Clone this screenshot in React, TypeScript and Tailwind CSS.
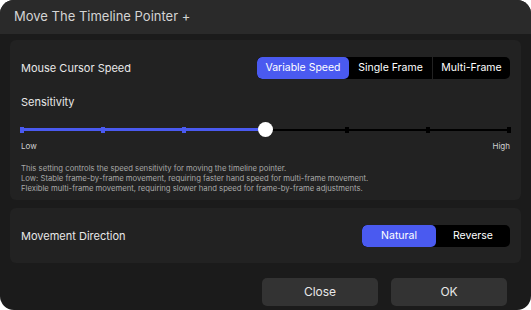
import React, { useState } from 'react'

const ticks = [0, 1, 2, 3, 4, 5, 6]

function Segmented({
  options,
  value,
  onChange,
  widths,
}: {
  options: string[]
  value: string
  onChange: (v: string) => void
  widths: string[]
}) {
  return (
    <div className="flex h-[22px] rounded-[5px] bg-black overflow-hidden">
      {options.map((o, i) => (
        <button
          key={o}
          onClick={() => onChange(o)}
          className={`${widths[i]} h-full text-[10.5px] flex items-center justify-center ${
            value === o ? 'bg-[#4a5af0] text-white rounded-[5px]' : 'text-white'
          } ${i > 0 && value !== o && value !== options[i - 1] ? 'border-l border-[#222]' : ''}`}
        >
          {o}
        </button>
      ))}
    </div>
  )
}

export default function App() {
  const [speed, setSpeed] = useState('Variable Speed')
  const [direction, setDirection] = useState('Natural')
  const level = 3

  return (
    <div className="w-[531px] h-[310px] bg-white" style={{ fontFamily: 'Inter, "Liberation Sans", sans-serif' }}>
      <div className="w-full h-full rounded-[14px] bg-[#1b1b1b] overflow-hidden flex flex-col">
        {/* Title bar */}
        <div className="h-[34px] bg-[#2a2a2a] flex items-center px-[14px] text-[13px] text-[#d4d4d4]">
          Move The Timeline Pointer +
        </div>

        <div className="flex-1 flex flex-col px-[10px] pt-[6px]">
          {/* Speed panel */}
          <div className="bg-[#222222] rounded-[6px] px-[11px] pt-[17px] h-[160px]">
            <div className="flex items-center justify-between">
              <span className="text-[11px] text-[#e8e8e8]">Mouse Cursor Speed</span>
              <Segmented
                options={['Variable Speed', 'Single Frame', 'Multi-Frame']}
                value={speed}
                onChange={setSpeed}
                widths={['w-[92px]', 'w-[83px]', 'w-[78px]']}
              />
            </div>

            <div className="mt-[15px] text-[11px] text-[#e8e8e8]">Sensitivity</div>

            <div className="relative h-[20px] mt-[9px] mx-[1px]">
              <div className="absolute left-0 right-0 top-[9px] h-[2px] bg-black" />
              <div
                className="absolute left-0 top-[8px] h-[3px] bg-[#4a5af0]"
                style={{ width: `${(level / 6) * 100}%` }}
              />
              {ticks.map((t) => (
                <div
                  key={t}
                  className={`absolute top-[7px] w-[4px] h-[6px] -ml-[2px] ${
                    t <= level ? 'bg-[#4a5af0]' : 'bg-black'
                  }`}
                  style={{ left: `${(t / 6) * 100}%` }}
                />
              ))}
              <div
                className="absolute top-[2px] w-[15px] h-[15px] -ml-[8px] rounded-full bg-white"
                style={{ left: `${(level / 6) * 100}%` }}
              />
            </div>

            <div className="flex justify-between text-[8px] text-[#d0d0d0]">
              <span>Low</span>
              <span>High</span>
            </div>

            <div className="mt-[12px] text-[7.7px] leading-[10px] text-[#a8a8a8]">
              <p>This setting controls the speed sensitivity for moving the timeline pointer.</p>
              <p>Low: Stable frame-by-frame movement, requiring faster hand speed for multi-frame movement.</p>
              <p>Flexible multi-frame movement, requiring slower hand speed for frame-by-frame adjustments.</p>
            </div>
          </div>

          {/* Direction panel */}
          <div className="bg-[#222222] rounded-[6px] px-[11px] mt-[8px] h-[55px] flex items-center justify-between">
            <span className="text-[11px] text-[#e8e8e8] mt-[2px]">Movement Direction</span>
            <Segmented
              options={['Natural', 'Reverse']}
              value={direction}
              onChange={setDirection}
              widths={['w-[74px]', 'w-[74px]']}
            />
          </div>

          {/* Footer */}
          <div className="flex justify-end gap-[13px] mt-[15px] pr-[14px]">
            <button className="w-[116px] h-[28px] rounded-[5px] bg-[#333333] text-[12px] text-[#e8e8e8]">
              Close
            </button>
            <button className="w-[116px] h-[28px] rounded-[5px] bg-[#333333] text-[12px] text-[#e8e8e8]">
              OK
            </button>
          </div>
        </div>
      </div>
    </div>
  )
}
